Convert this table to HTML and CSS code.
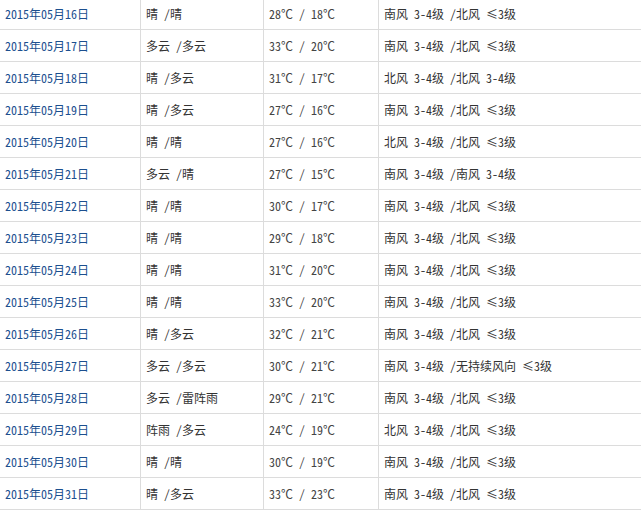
FILE: index.html
```html
<!DOCTYPE html>
<html lang="zh-CN">
<head>
<meta charset="utf-8">
<title>2015年05月天气</title>
<link rel="stylesheet" href="styles.css">
</head>
<body>
<table class="weather">
<colgroup>
<col class="c-date"><col class="c-sky"><col class="c-temp"><col class="c-wind">
</colgroup>
<tbody>
<tr><td><a href="#">2015年05月16日</a></td><td>晴 /晴</td><td class="t">28℃ / 18℃</td><td>南风 3-4级 /北风 ≤3级</td></tr>
<tr><td><a href="#">2015年05月17日</a></td><td>多云 /多云</td><td class="t">33℃ / 20℃</td><td>南风 3-4级 /北风 ≤3级</td></tr>
<tr><td><a href="#">2015年05月18日</a></td><td>晴 /多云</td><td class="t">31℃ / 17℃</td><td>北风 3-4级 /北风 3-4级</td></tr>
<tr><td><a href="#">2015年05月19日</a></td><td>晴 /多云</td><td class="t">27℃ / 16℃</td><td>南风 3-4级 /北风 ≤3级</td></tr>
<tr><td><a href="#">2015年05月20日</a></td><td>晴 /晴</td><td class="t">27℃ / 16℃</td><td>北风 3-4级 /北风 ≤3级</td></tr>
<tr><td><a href="#">2015年05月21日</a></td><td>多云 /晴</td><td class="t">27℃ / 15℃</td><td>南风 3-4级 /南风 3-4级</td></tr>
<tr><td><a href="#">2015年05月22日</a></td><td>晴 /晴</td><td class="t">30℃ / 17℃</td><td>南风 3-4级 /北风 ≤3级</td></tr>
<tr><td><a href="#">2015年05月23日</a></td><td>晴 /晴</td><td class="t">29℃ / 18℃</td><td>南风 3-4级 /北风 ≤3级</td></tr>
<tr><td><a href="#">2015年05月24日</a></td><td>晴 /晴</td><td class="t">31℃ / 20℃</td><td>南风 3-4级 /北风 ≤3级</td></tr>
<tr><td><a href="#">2015年05月25日</a></td><td>晴 /晴</td><td class="t">33℃ / 20℃</td><td>南风 3-4级 /北风 ≤3级</td></tr>
<tr><td><a href="#">2015年05月26日</a></td><td>晴 /多云</td><td class="t">32℃ / 21℃</td><td>南风 3-4级 /北风 ≤3级</td></tr>
<tr><td><a href="#">2015年05月27日</a></td><td>多云 /多云</td><td class="t">30℃ / 21℃</td><td>南风 3-4级 /无持续风向 ≤3级</td></tr>
<tr><td><a href="#">2015年05月28日</a></td><td>多云 /雷阵雨</td><td class="t">29℃ / 21℃</td><td>南风 3-4级 /北风 ≤3级</td></tr>
<tr><td><a href="#">2015年05月29日</a></td><td>阵雨 /多云</td><td class="t">24℃ / 19℃</td><td>北风 3-4级 /北风 ≤3级</td></tr>
<tr><td><a href="#">2015年05月30日</a></td><td>晴 /晴</td><td class="t">30℃ / 19℃</td><td>南风 3-4级 /北风 ≤3级</td></tr>
<tr><td><a href="#">2015年05月31日</a></td><td>晴 /多云</td><td class="t">33℃ / 23℃</td><td>南风 3-4级 /北风 ≤3级</td></tr>
</tbody>
</table>
</body>
</html>
```
FILE: styles.css
```css
html, body {
  margin: 0;
  padding: 0;
  background: #fff;
}
body {
  font-family: "Noto Sans Mono CJK SC", "Noto Sans CJK SC", "Liberation Sans", sans-serif;
  font-size: 12px;
  font-weight: 300;
  color: #333;
}
.weather {
  width: 641px;
  table-layout: fixed;
  border-collapse: separate;
  border-spacing: 0;
  margin-top: -2px;
}
.c-date { width: 141px; }
.c-sky { width: 123px; }
.c-temp { width: 115px; }
.c-wind { width: 262px; }
.weather td {
  box-sizing: border-box;
  height: 32px;
  padding: 0 0 0 5px;
  border-bottom: 1px solid #dcdcdc;
  border-right: 1px solid #dcdcdc;
  vertical-align: middle;
  white-space: nowrap;
  line-height: 16px;
}
.weather td:last-child {
  border-right: 0;
}
.weather a {
  color: #1c4f8f;
  text-decoration: none;
}
.weather .t {
  color: #444;
}
```
